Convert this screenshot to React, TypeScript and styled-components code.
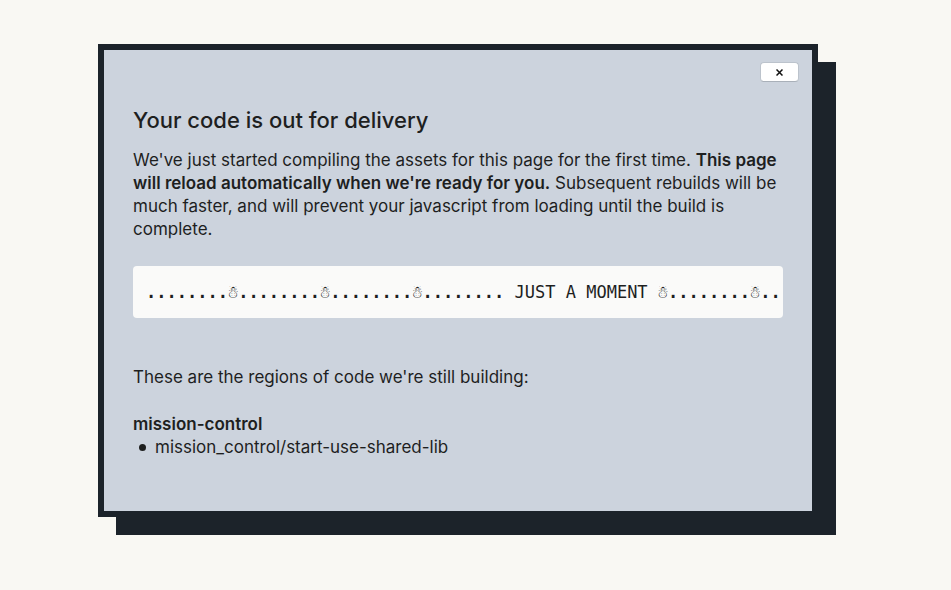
import React from "react";
import styled, { createGlobalStyle } from "styled-components";

const GlobalStyle = createGlobalStyle`
  * { box-sizing: border-box; }
  body {
    margin: 0;
    background: #f9f8f3;
    color: #1e1f1f;
    font-family: Inter, "Liberation Sans", sans-serif;
    font-size: 17px;
    line-height: 23px;
  }
`;

const Page = styled.main`
  padding: 44px 133px 55px 98px;
`;

const Dialog = styled.section`
  border: 6px solid #1c232a;
  background: #ccd3dd;
  box-shadow: 18px 18px 0 #1c232a;
  padding: 12px 13px 52px 29px;
`;

const TopBar = styled.div`
  display: flex;
  justify-content: flex-end;
`;

const CloseButton = styled.button`
  display: flex;
  align-items: center;
  justify-content: center;
  width: 39px;
  height: 20px;
  padding: 0;
  border: 1px solid #bcc3cc;
  border-bottom-color: #a9b0b9;
  border-radius: 4px;
  background: #fff;
  color: #111;
`;

const Content = styled.div`
  padding-right: 16px;
`;

const Title = styled.h1`
  margin: 24px 0 14px;
  font-size: 22px;
  line-height: 29px;
  font-weight: 500;
`;

const Text = styled.p`
  margin: 0;
`;

const Strong = styled.strong`
  font-weight: 600;
`;

const Ticker = styled.div`
  margin: 25px 0 48px;
  padding: 0 13px;
  border-radius: 4px;
  background: #fafaf9;
  font-family: "DejaVu Sans Mono", monospace;
  font-size: 17px;
  line-height: 52px;
  white-space: pre;
  overflow: hidden;
`;

const Dots = styled.b`
  font-weight: 700;
`;

const GroupName = styled.h2`
  margin: 24px 0 0;
  font-size: 17px;
  line-height: 23px;
  font-weight: 600;
`;

const Regions = styled.ul`
  margin: 0;
  padding: 0;
  list-style: none;
`;

const Region = styled.li`
  display: flex;
  align-items: center;
  gap: 9px;
  padding-left: 6px;

  &::before {
    content: "";
    width: 7px;
    height: 7px;
    border-radius: 50%;
    background: currentColor;
  }
`;

const trail = "........";

const Trails = () => (
  <>
    {[0, 1, 2].map((i) => (
      <React.Fragment key={i}>
        <Dots>{trail}</Dots>☃
      </React.Fragment>
    ))}
    <Dots>{trail}</Dots>
  </>
);

export default function App() {
  return (
    <Page>
      <GlobalStyle />
      <Dialog role="dialog" aria-labelledby="title">
        <TopBar>
          <CloseButton type="button" aria-label="Close">
            <svg width="7" height="7" viewBox="0 0 7 7" stroke="currentColor" strokeWidth="1.5">
              <path d="M0.5 0.5 6.5 6.5M6.5 0.5 0.5 6.5" />
            </svg>
          </CloseButton>
        </TopBar>
        <Content>
          <Title id="title">Your code is out for delivery</Title>
          <Text>
            We've just started compiling the assets for this page for the first time.{" "}
            <Strong>This page will reload automatically when we're ready for you.</Strong> Subsequent rebuilds will be
            much faster, and will prevent your javascript from loading until the build is complete.
          </Text>
          <Ticker>
            <Trails /> JUST A MOMENT ☃<Trails />
          </Ticker>
          <Text>These are the regions of code we're still building:</Text>
          <GroupName>mission-control</GroupName>
          <Regions>
            <Region>mission_control/start-use-shared-lib</Region>
          </Regions>
        </Content>
      </Dialog>
    </Page>
  );
}
